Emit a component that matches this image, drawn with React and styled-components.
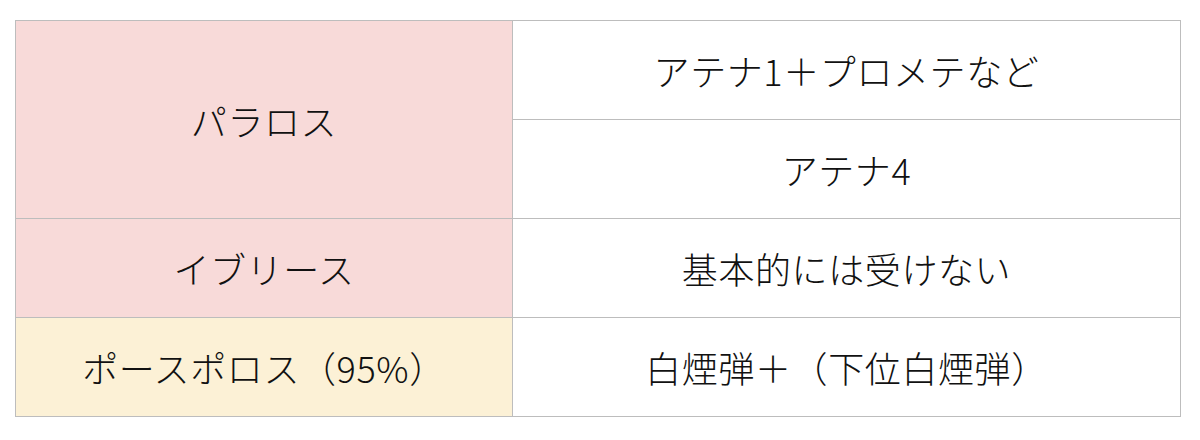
import React from "react";
import styled, { createGlobalStyle } from "styled-components";

const GlobalStyle = createGlobalStyle`
  html, body {
    margin: 0;
    padding: 0;
    background: #ffffff;
  }
  body {
    font-family: "Noto Sans CJK JP", "Noto Sans", sans-serif;
    color: #111111;
  }
`;

const Page = styled.div`
  padding: 20px 0 0 15px;
`;

const Table = styled.table`
  width: 1166px;
  border-collapse: collapse;
  table-layout: fixed;
  border: 1px solid #c4c4c4;
`;

const Cell = styled.td`
  height: 98px;
  padding: 0;
  border: 1px solid #bdbdbd;
  text-align: center;
  vertical-align: middle;
  font-size: 36px;
  font-weight: 300;
  line-height: 1;
  letter-spacing: 0.6px;
  background: ${(p) =>
    p.$tone === "pink" ? "#f8dad9" : p.$tone === "cream" ? "#fcf1d6" : "#ffffff"};
`;

const rows = [
  { left: "パラロス", tone: "pink", right: ["アテナ1＋プロメテなど", "アテナ4"] },
  { left: "イブリース", tone: "pink", right: ["基本的には受けない"] },
  { left: "ポースポロス（95%）", tone: "cream", right: ["白煙弾＋（下位白煙弾）"] },
];

export default function App() {
  return (
    <Page>
      <GlobalStyle />
      <Table>
        <colgroup>
          <col style={{ width: "497px" }} />
          <col />
        </colgroup>
        <tbody>
          {rows.map((row) =>
            row.right.map((text, i) => (
              <tr key={row.left + i}>
                {i === 0 && (
                  <Cell $tone={row.tone} rowSpan={row.right.length}>
                    {row.left}
                  </Cell>
                )}
                <Cell>{text}</Cell>
              </tr>
            ))
          )}
        </tbody>
      </Table>
    </Page>
  );
}
